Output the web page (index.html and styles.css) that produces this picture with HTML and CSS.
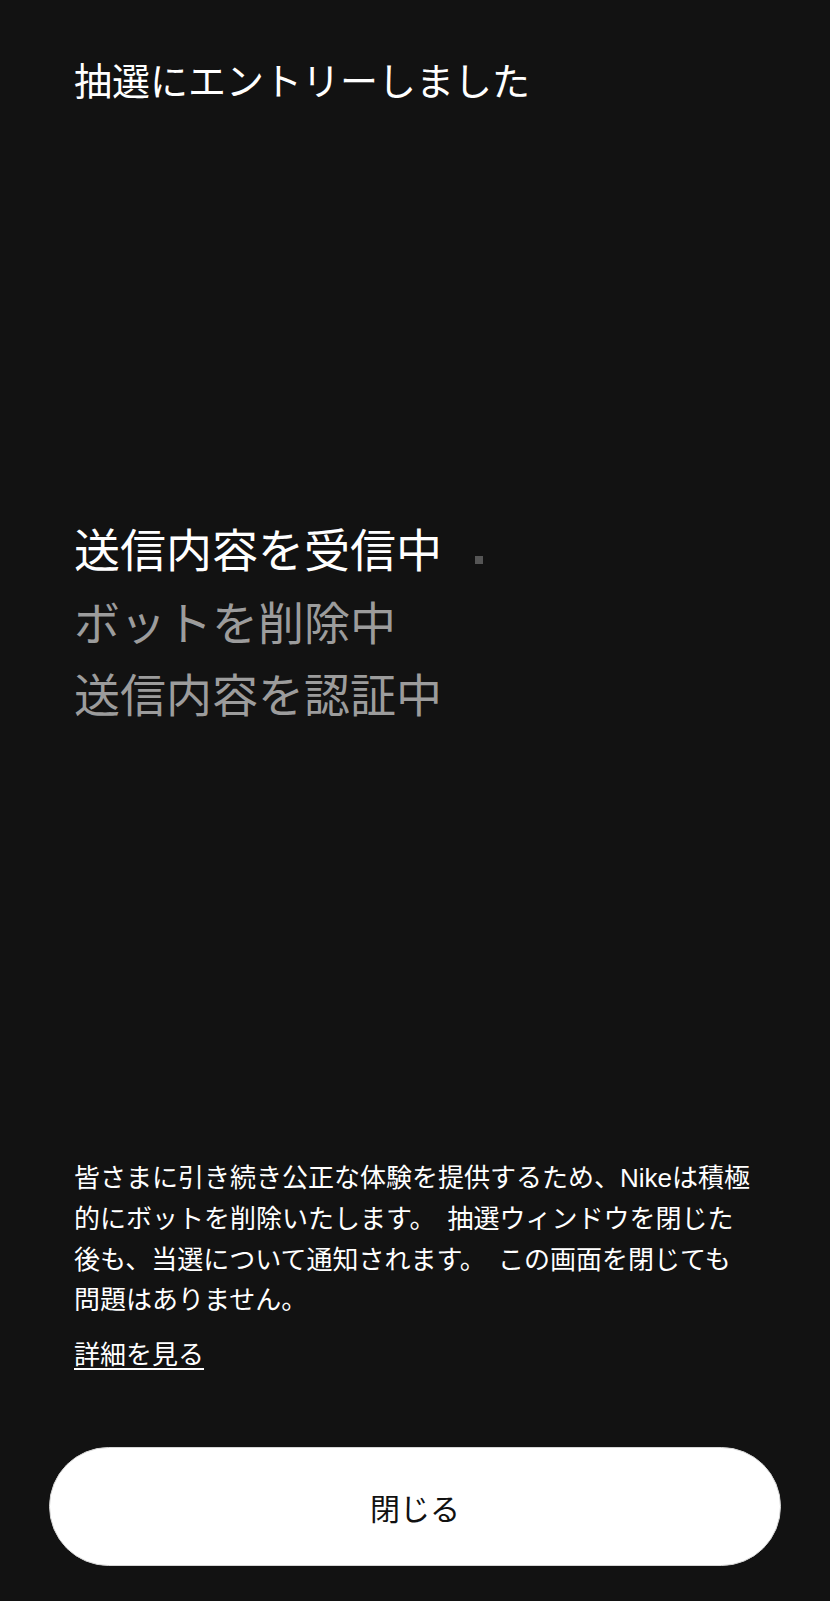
FILE: index.html
```html
<!DOCTYPE html>
<html lang="ja">
  <head>
    <meta charset="UTF-8" />
    <meta name="viewport" content="width=device-width, initial-scale=1.0" />
    <title>抽選にエントリーしました</title>
    <link rel="stylesheet" href="styles.css">
  </head>
  <body>
    <div class="screen">
      <h1 class="title">抽選にエントリーしました</h1>

      <section class="status">
        <div class="step active">送信内容を受信中<span class="loader"></span></div>
        <div class="step">ボットを削除中</div>
        <div class="step">送信内容を認証中</div>
      </section>

      <section class="notice">
        <p class="notice-text">皆さまに引き続き公正な体験を提供するため、Nikeは積極的にボットを削除いたします。 抽選ウィンドウを閉じた後も、当選について通知されます。 この画面を閉じても問題はありません。</p>
        <a href="#" class="more-link">詳細を見る</a>
      </section>

      <button class="close-button">閉じる</button>
    </div>
  </body>
</html>
```

FILE: styles.css
```css
* {
  margin: 0;
  padding: 0;
  box-sizing: border-box;
  font-family: "Liberation Sans", "Noto Sans CJK JP", sans-serif;
}

body {
  background-color: #121212;
  color: white;
}
.screen {
  display: flex;
  flex-direction: column;
  min-height: 1601px;
  padding: 56px 0 35px;
}
.title {
  font-size: 38px;
  font-weight: normal;
  line-height: 52px;
  padding-left: 74px;
}
.status {
  margin-top: 407px;
  padding-left: 74px;
}
.step {
  font-size: 46px;
  line-height: 72.5px;
  color: #9c9c9c;
}
.step.active {
  color: white;
}
.loader {
  display: inline-block;
  width: 8px;
  height: 8px;
  margin-left: 33px;
  margin-bottom: 3px;
  background-color: #555555;
}
.notice {
  margin-top: auto;
  padding-left: 74px;
}
.notice-text {
  max-width: 680px;
  font-size: 26px;
  line-height: 40.7px;
  word-spacing: 5px;
}
.more-link {
  display: inline-block;
  margin-top: 14px;
  font-size: 26px;
  line-height: 40px;
  color: white;
  text-decoration: underline;
  text-underline-offset: 4px;
}
.close-button {
  margin: 72px 49px 0;
  height: 119px;
  border: 1px solid #d6d6d6;
  border-radius: 60px;
  background-color: white;
  color: #111111;
  font-size: 30px;
  cursor: pointer;
}
```
